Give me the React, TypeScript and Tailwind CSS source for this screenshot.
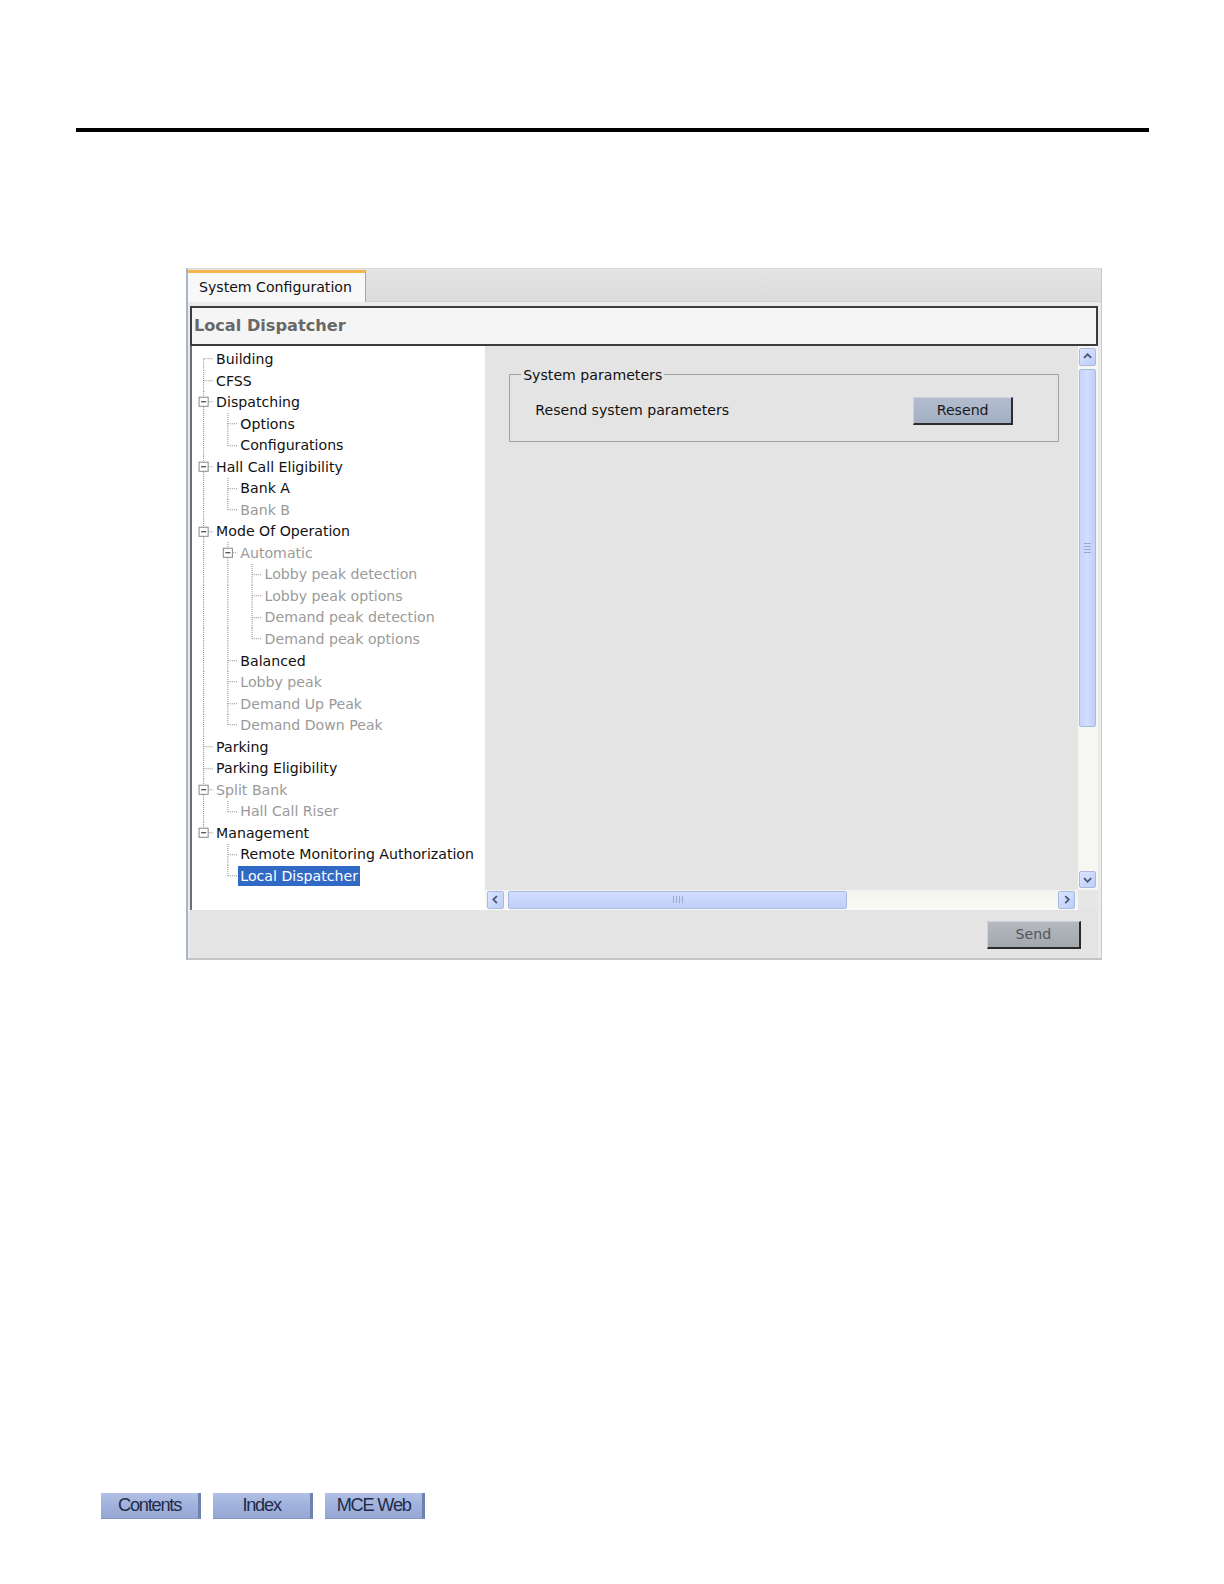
import React from "react";

type Item = { l: number; t: string; d?: boolean; e?: boolean; s?: boolean };

const items: Item[] = [
  { l: 1, t: "Building" },
  { l: 1, t: "CFSS" },
  { l: 1, t: "Dispatching", e: true },
  { l: 2, t: "Options" },
  { l: 2, t: "Configurations" },
  { l: 1, t: "Hall Call Eligibility", e: true },
  { l: 2, t: "Bank A" },
  { l: 2, t: "Bank B", d: true },
  { l: 1, t: "Mode Of Operation", e: true },
  { l: 2, t: "Automatic", e: true, d: true },
  { l: 3, t: "Lobby peak detection", d: true },
  { l: 3, t: "Lobby peak options", d: true },
  { l: 3, t: "Demand peak detection", d: true },
  { l: 3, t: "Demand peak options", d: true },
  { l: 2, t: "Balanced" },
  { l: 2, t: "Lobby peak", d: true },
  { l: 2, t: "Demand Up Peak", d: true },
  { l: 2, t: "Demand Down Peak", d: true },
  { l: 1, t: "Parking" },
  { l: 1, t: "Parking Eligibility" },
  { l: 1, t: "Split Bank", e: true, d: true },
  { l: 2, t: "Hall Call Riser", d: true },
  { l: 1, t: "Management", e: true },
  { l: 2, t: "Remote Monitoring Authorization" },
  { l: 2, t: "Local Dispatcher", s: true },
];

function hasNext(idx: number): boolean {
  const L = items[idx].l;
  for (let j = idx + 1; j < items.length; j++) {
    if (items[j].l < L) return false;
    if (items[j].l === L) return true;
  }
  return false;
}

const rows = items.map((it, i) => {
  const cont: Record<number, boolean> = {};
  let lvl = it.l;
  for (let j = i - 1; j >= 0 && lvl > 1; j--) {
    if (items[j].l < lvl) {
      lvl = items[j].l;
      cont[lvl] = hasNext(j);
    }
  }
  return { ...it, next: hasNext(i), cont, first: i === 0 };
});

const DOT = "#8f8f8f";

function Guides({ r }: { r: (typeof rows)[number] }) {
  const w = 24 * r.l - 2;
  const lines: React.ReactNode[] = [];
  for (let k = 1; k < r.l; k++) {
    if (r.cont[k]) {
      const x = 11.5 + 24 * (k - 1);
      lines.push(
        <line key={"v" + k} x1={x} x2={x} y1="0" y2="100%" stroke={DOT} strokeDasharray="1 1" />
      );
    }
  }
  const cx = 11.5 + 24 * (r.l - 1);
  lines.push(
    <line
      key="own"
      x1={cx}
      x2={cx}
      y1={r.first ? "50%" : "0"}
      y2={r.next ? "100%" : "50%"}
      stroke={DOT}
      strokeDasharray="1 1"
    />
  );
  lines.push(
    <line key="h" x1={r.e ? cx + 5 : cx} x2={w - 1} y1="50%" y2="50%" stroke={DOT} strokeDasharray="1 1" />
  );
  return (
    <svg width={w} height="100%" className="shrink-0 overflow-visible">
      {lines}
      {r.e && (
        <svg x={cx - 4.5} y="50%" width="9" height="1" overflow="visible">
          <rect x="0" y="-4.5" width="9" height="9" fill="white" stroke="#8a8a8a" />
          <line x1="2" x2="7" y1="0" y2="0" stroke="#202020" />
        </svg>
      )}
    </svg>
  );
}

function Chevron({ dir }: { dir: "up" | "down" | "left" | "right" }) {
  const paths: Record<string, string> = {
    up: "M4.5 10 L8.5 6 L12.5 10",
    down: "M4.5 7 L8.5 11 L12.5 7",
    left: "M10 4.5 L6 8.5 L10 12.5",
    right: "M7 4.5 L11 8.5 L7 12.5",
  };
  return (
    <svg width="17" height="17" viewBox="0 0 17 17">
      <path d={paths[dir]} fill="none" stroke="#4b5578" strokeWidth="2" />
    </svg>
  );
}

function SBtn({ dir }: { dir: "up" | "down" | "left" | "right" }) {
  return (
    <div className="w-[17px] h-[17px] shrink-0 rounded-[2px] border border-[#a9b9e2] bg-gradient-to-br from-[#dbe5ff] to-[#bccdf7] flex items-center justify-center">
      <Chevron dir={dir} />
    </div>
  );
}

export default function App() {
  return (
    <div
      className="w-[1212px] h-[1568px] overflow-hidden bg-white [zoom:1.0101]"
      style={{ fontFamily: '"DejaVu Sans", Verdana, sans-serif' }}
    >
      <div className="h-[127px]" />
      <div className="ml-[75px] w-[1063px] h-[4px] bg-black" />
      <div className="h-[134px]" />

      {/* Panel */}
      <div className="ml-[184px] w-[907px] h-[685px] flex flex-col border-t border-t-[#dadada] border-l-2 border-l-[#a9b6c9] border-r border-r-[#c9c9c9] border-b-2 border-b-[#c4c4c4] bg-[#e6e6e6]">
        {/* tab strip */}
        <div className="h-[33px] shrink-0 flex bg-gradient-to-b from-[#e4e4e4] to-[#dcdcdc] border-b border-b-[#d0d0d0]">
          <div className="mt-[1px] w-[176px] h-[32px] bg-[#f8f8f8] border-t-[3px] border-t-[#f3b64a] border-r border-r-[#a6a6a6] flex items-center pl-[11px] text-[14px] text-[#111] leading-none whitespace-nowrap">
            System Configuration
          </div>
        </div>

        <div className="flex-1 flex flex-col pl-[2px] pr-[3px] pt-[4px] bg-[#ebebeb]">
          {/* header */}
          <div className="h-[40px] shrink-0 border-2 border-[#3c3c3c] bg-[#f5f5f5] flex items-center pl-[2px]">
            <span className="text-[16px] font-bold text-[#686868] leading-none">Local Dispatcher</span>
          </div>

          {/* main */}
          <div className="h-[558px] shrink-0 flex">
            {/* tree */}
            <div className="w-[292px] shrink-0 bg-white border-l-2 border-l-[#6f6f6f] pt-[2px] text-[14px] leading-none">
              {rows.map((r, i) => (
                <div key={i} className="h-[21.33px] flex items-stretch">
                  <Guides r={r} />
                  <div className="flex items-center">
                    <span
                      className={
                        "px-[2px] h-[20px] flex items-center whitespace-nowrap " +
                        (r.s ? "bg-[#316ac5] text-white" : r.d ? "text-[#9a9a9a]" : "text-[#111]")
                      }
                    >
                      {r.t}
                    </span>
                  </div>
                </div>
              ))}
            </div>

            {/* right */}
            <div className="flex-1 flex flex-col">
              <div className="flex-1 flex">
                <div className="flex-1 bg-[#e4e4e4] pl-[24px] pt-[20px] pr-[19px]">
                  <fieldset className="border border-[#a2a2a2] px-[25px] pr-[44px] pb-[16px]">
                    <legend className="ml-[-14px] px-[2px] text-[14px] leading-[16px] text-[#111]">System parameters</legend>
                    <div className="mt-[14px] h-[28px] flex items-center justify-between">
                      <span className="text-[14px] text-[#111]">Resend system parameters</span>
                      <button className="w-[99px] h-[28px] bg-gradient-to-b from-[#b3bdcf] to-[#a2aec3] border border-t-[#c8d0dc] border-l-[#c8d0dc] border-r-2 border-b-2 border-r-[#2c2c2c] border-b-[#2c2c2c] text-[14px] text-[#1a1a1a]">
                        Resend
                      </button>
                    </div>
                  </fieldset>
                </div>
                {/* vertical scrollbar */}
                <div className="w-[20px] shrink-0 bg-[#f6f6f2] flex flex-col items-center pt-[2px] pb-[2px]">
                  <SBtn dir="up" />
                  <div className="mt-[3px] w-[17px] h-[355px] rounded-[2px] border border-[#a9b9e2] bg-gradient-to-r from-[#c6d5fc] via-[#d0ddff] to-[#bfcff8] flex items-center justify-center">
                    <div className="flex flex-col gap-[2px]">
                      <div className="w-[7px] h-px bg-[#98a8d0]" />
                      <div className="w-[7px] h-px bg-[#98a8d0]" />
                      <div className="w-[7px] h-px bg-[#98a8d0]" />
                      <div className="w-[7px] h-px bg-[#98a8d0]" />
                    </div>
                  </div>
                  <div className="flex-1" />
                  <SBtn dir="down" />
                </div>
              </div>
              {/* horizontal scrollbar row */}
              <div className="h-[20px] shrink-0 flex">
                <div className="flex-1 bg-gradient-to-b from-[#f3f3ee] to-[#fbfbf6] flex items-center pl-[2px] pr-[3px]">
                  <SBtn dir="left" />
                  <div className="ml-[4px] w-[336px] h-[17px] rounded-[2px] border border-[#a9b9e2] bg-gradient-to-b from-[#d0ddff] to-[#bfcff8] flex items-center justify-center">
                    <div className="flex gap-[2px]">
                      <div className="w-px h-[7px] bg-[#98a8d0]" />
                      <div className="w-px h-[7px] bg-[#98a8d0]" />
                      <div className="w-px h-[7px] bg-[#98a8d0]" />
                      <div className="w-px h-[7px] bg-[#98a8d0]" />
                    </div>
                  </div>
                  <div className="flex-1" />
                  <SBtn dir="right" />
                </div>
                <div className="w-[20px] shrink-0 bg-[#e6e6e6]" />
              </div>
            </div>
          </div>

          {/* bottom */}
          <div className="flex-1 bg-[#e4e4e4] flex justify-end items-start pt-[11px] pr-[17px]">
            <button className="w-[93px] h-[28px] bg-gradient-to-b from-[#b4b8bf] to-[#a3a7ae] border border-t-[#cfd2d6] border-l-[#cfd2d6] border-r-2 border-b-2 border-r-[#2a2a2a] border-b-[#2a2a2a] text-[14px] text-[#555]">
              Send
            </button>
          </div>
        </div>
      </div>

      <div className="h-[528px]" />
      {/* nav buttons */}
      <div className="ml-[100px] flex gap-[12px]" style={{ fontFamily: '"Liberation Sans", Arial, sans-serif' }}>
        {["Contents", "Index", "MCE Web"].map((t) => (
          <div
            key={t}
            className="w-[99px] h-[26px] bg-gradient-to-b from-[#b2c0e4] via-[#9fb1dc] to-[#95a7d3] border-r-[3px] border-r-[#6f80aa] border-b border-b-[#8596c0] flex items-center justify-center text-[18px] tracking-[-1.2px] text-[#1f2b48] leading-none"
          >
            {t}
          </div>
        ))}
      </div>
    </div>
  );
}
